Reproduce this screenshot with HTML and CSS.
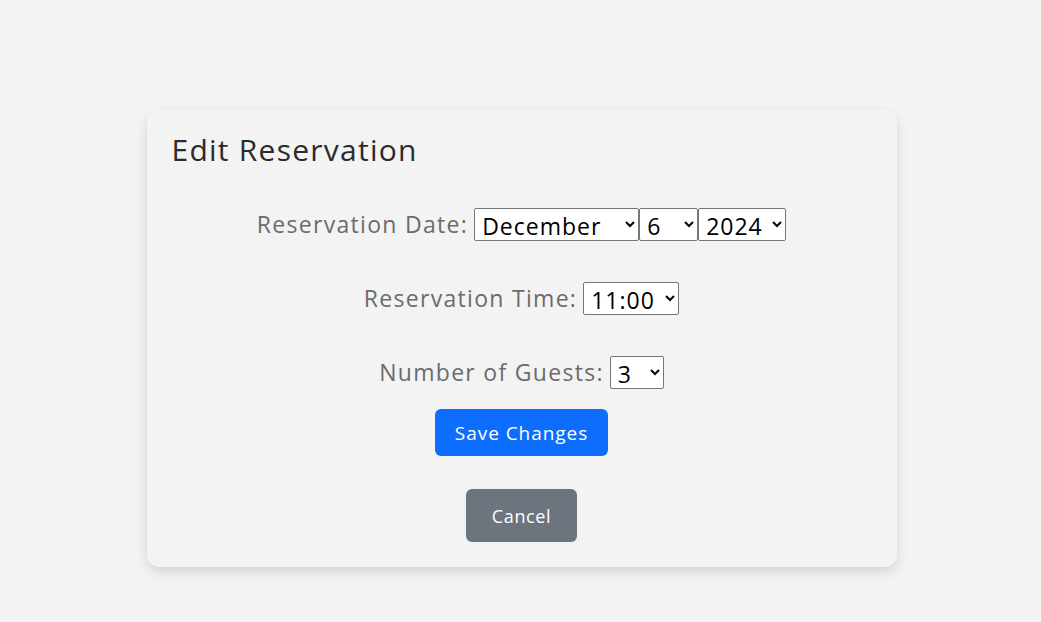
FILE: index.html
```html
<!DOCTYPE html>
<html lang="en">
<head>
<meta charset="utf-8">
<title>Edit Reservation</title>
<link rel="stylesheet" href="styles.css">
</head>
<body>
<main class="page">
  <section class="card">
    <h2 class="title">Edit Reservation</h2>
    <form class="form">
      <div class="row">
        <label class="label" for="month">Reservation Date:</label>
        <span class="selects">
          <select id="month" class="sel sel-month"><option>December</option></select><select class="sel sel-day"><option>6</option></select><select class="sel sel-year"><option>2024</option></select>
        </span>
      </div>
      <div class="row">
        <label class="label" for="time">Reservation Time:</label>
        <select id="time" class="sel sel-time"><option>11:00</option></select>
      </div>
      <div class="row">
        <label class="label" for="guests">Number of Guests:</label>
        <select id="guests" class="sel sel-guests"><option>3</option></select>
      </div>
      <button type="button" class="btn btn-primary">Save Changes</button>
      <button type="button" class="btn btn-secondary">Cancel</button>
    </form>
  </section>
</main>
</body>
</html>
```

FILE: styles.css
```css
html, body {
  margin: 0;
  padding: 0;
  background: #f3f3f3;
  font-family: "Open Sans", "DejaVu Sans", sans-serif;
}
.page {
  display: flex;
  justify-content: center;
  padding-top: 110px;
  padding-bottom: 40px;
  padding-left: 2px;
}
.card {
  width: 750px;
  box-sizing: border-box;
  background: #f3f3f3;
  border-radius: 12px;
  box-shadow: 0 5px 12px rgba(0,0,0,0.13);
  padding: 22px 25px 25px;
}
.title {
  margin: 0;
  font-weight: 400;
  font-size: 30px;
  letter-spacing: 1.25px;
  color: #2b2b2b;
  line-height: 36px;
}
.form {
  display: flex;
  flex-direction: column;
  align-items: center;
  margin-top: 39px;
}
.row {
  display: flex;
  align-items: center;
  justify-content: center;
  height: 34px;
  margin-bottom: 40px;
}
.row:nth-child(3) { margin-bottom: 20px; }
.label {
  font-size: 23px;
  letter-spacing: 1.3px;
  color: #6b6b6b;
  margin-right: 6px;
}
.selects { display: flex; }
.sel {
  font-family: inherit;
  font-size: 23px;
  letter-spacing: 1px;
  color: #000;
  background: #fff;
  border: 1px solid #767676;
  border-radius: 2px;
  height: 33px;
  padding: 0 3px;
}
.sel-month { width: 165px; }
.sel-day { width: 59px; }
.sel-year { width: 88px; }
.sel-time { width: 96px; }
.sel-guests { width: 54px; }
.btn {
  font-family: inherit;
  color: #fff;
  border: none;
  border-radius: 6px;
  cursor: pointer;
  letter-spacing: 0.6px;
}
.btn-primary {
  background: #0d6efd;
  font-size: 19px;
  letter-spacing: 0.95px;
  width: 173px;
  height: 47px;
  margin-bottom: 33px;
}
.btn-secondary {
  background: #6c757d;
  font-size: 18px;
  width: 111px;
  height: 53px;
}
```
